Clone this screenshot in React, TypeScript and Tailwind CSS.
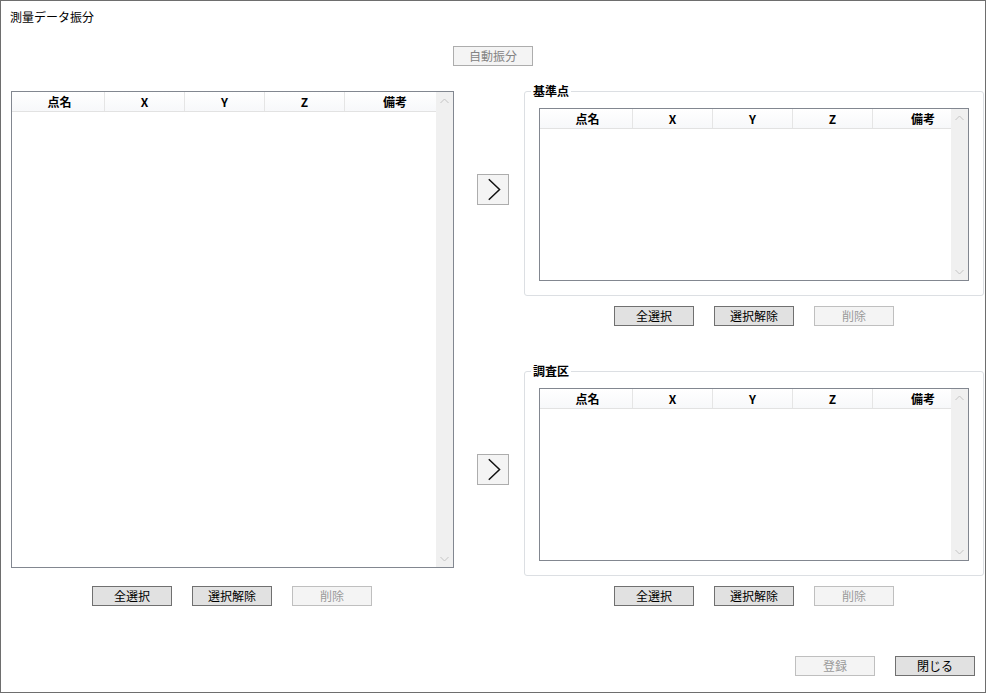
import React from "react";

const FONT = { fontFamily: '"Noto Sans CJK JP", "Noto Sans", sans-serif' };

function Btn({ label, disabled }: { label: string; disabled?: boolean }) {
  return (
    <button
      className={`w-[80px] h-[20px] border text-[12px] leading-[16px] flex items-center justify-center ${
        disabled ? "bg-[#f4f4f4] border-[#bfbfbf] text-[#9a9a9a]" : "bg-[#e1e1e1] border-[#707070] text-black"
      }`}
    >
      {label}
    </button>
  );
}

function ArrowBtn() {
  return (
    <button className="w-[32px] h-[31px] mt-[83px] bg-[#f4f4f4] border border-[#adadad] flex items-center justify-center shrink-0">
      <svg width="32" height="31" viewBox="0 0 32 31">
        <polyline points="11.5,4.5 23,15.5 11.5,26.5" fill="none" stroke="#111" strokeWidth="1.6" />
      </svg>
    </button>
  );
}

function Chevron({ up }: { up?: boolean }) {
  return (
    <div className="w-[17px] h-[17px] flex items-center justify-center">
      <svg width="9" height="6" viewBox="0 0 9 6">
        <polyline
          points={up ? "0.5,5 4.5,1 8.5,5" : "0.5,1 4.5,5 8.5,1"}
          fill="none"
          stroke="#c4c4c4"
          strokeWidth="1"
        />
      </svg>
    </div>
  );
}

const cols = [
  { name: "点名", w: "w-[90px]" },
  { name: "X", w: "w-[80px]" },
  { name: "Y", w: "w-[80px]" },
  { name: "Z", w: "w-[80px]" },
  { name: "備考", w: "w-[100px]" },
];

function ListView({ className }: { className: string }) {
  return (
    <div className={`border border-[#828790] bg-white flex ${className}`}>
      <div className="flex-1 overflow-hidden">
        <div className="flex h-[20px] pl-[3px] border-b border-[#e2e2e2] bg-gradient-to-b from-white to-[#f7f8fa] w-max">
          {cols.map((c, i) => (
            <div
              key={c.name}
              className={`${c.w} shrink-0 h-full flex items-center justify-center text-[12px] font-semibold ${
                i < cols.length - 1 ? "border-r border-[#e5e5e5]" : ""
              }`}
            >
              {c.name}
            </div>
          ))}
        </div>
      </div>
      <div className="w-[17px] bg-[#f0f0f0] flex flex-col justify-between">
        <Chevron up />
        <Chevron />
      </div>
    </div>
  );
}

function Group({ title }: { title: string }) {
  return (
    <div className="relative w-[460px] h-[205px] border border-[#dcdfe3] rounded-[3px] pt-[16px] px-[14px]">
      <span className="absolute left-[6px] top-[-9px] bg-white px-[2px] text-[12px] leading-[16px] font-semibold">
        {title}
      </span>
      <ListView className="w-[430px] h-[173px]" />
    </div>
  );
}

function BtnRow({ className }: { className: string }) {
  return (
    <div className={`flex gap-[20px] ${className}`}>
      <Btn label="全選択" />
      <Btn label="選択解除" />
      <Btn label="削除" disabled />
    </div>
  );
}

export default function App() {
  return (
    <div style={FONT} className="w-[986px] h-[693px] border border-[#6e6e6e] bg-white flex flex-col text-black">
      <div className="pl-[9px] pt-[8px] text-[12px] leading-[16px]">測量データ振分</div>
      <div className="mt-[21px] ml-[452px]">
        <button className="w-[80px] h-[20px] bg-[#f4f4f4] border border-[#adadad] text-[#838383] text-[12px] flex items-center justify-center">
          自動振分
        </button>
      </div>
      <div className="mt-[25px] flex">
        <div className="pl-[10px] flex flex-col">
          <ListView className="w-[443px] h-[477px]" />
          <BtnRow className="mt-[18px] ml-[81px]" />
        </div>
        <div className="ml-[23px] flex flex-col">
          <div className="flex">
            <ArrowBtn />
            <div className="ml-[15px] flex flex-col">
              <Group title="基準点" />
              <BtnRow className="mt-[10px] ml-[90px]" />
            </div>
          </div>
          <div className="flex mt-[45px]">
            <ArrowBtn />
            <div className="ml-[15px] flex flex-col">
              <Group title="調査区" />
              <BtnRow className="mt-[10px] ml-[90px]" />
            </div>
          </div>
        </div>
      </div>
      <div className="mt-[50px] flex justify-end gap-[20px] pr-[10px]">
        <Btn label="登録" disabled />
        <Btn label="閉じる" />
      </div>
    </div>
  );
}
